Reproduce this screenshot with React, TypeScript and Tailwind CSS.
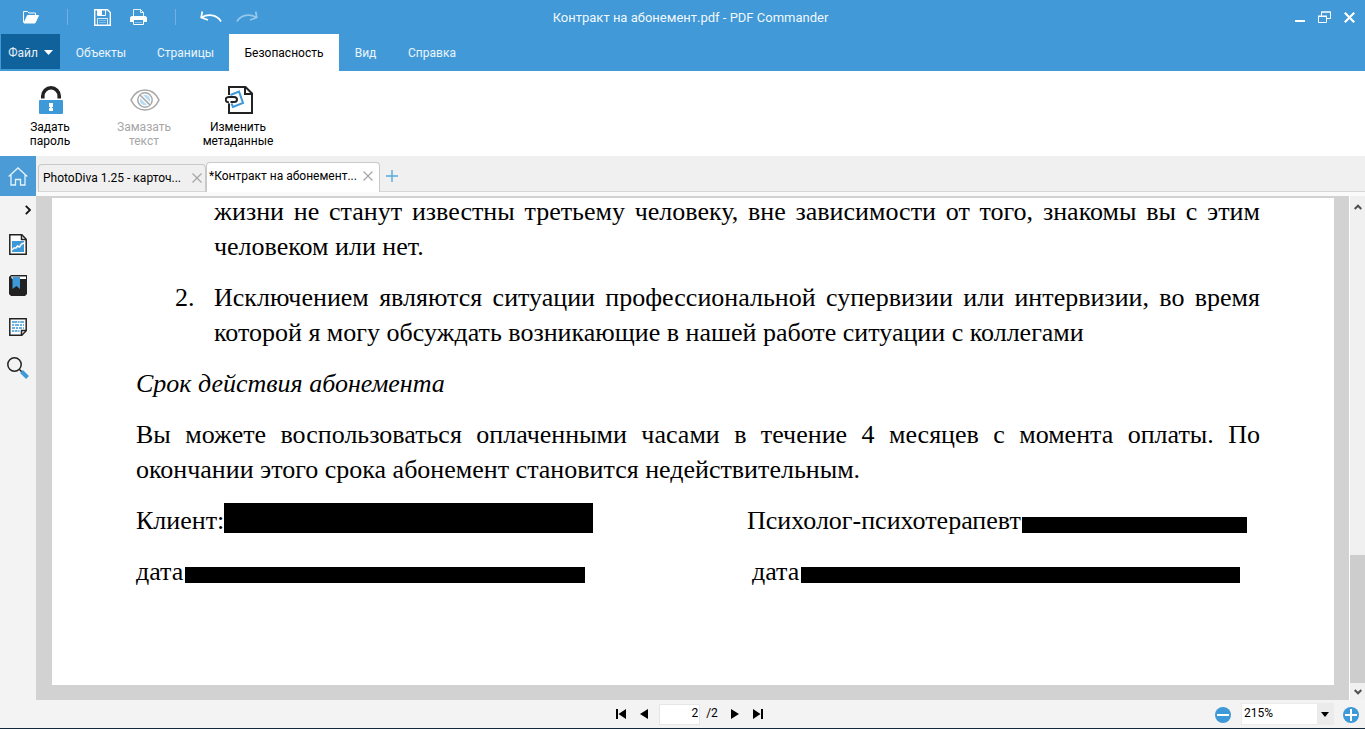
import type { ReactNode } from 'react';

const menus = [
  { label: 'Объекты', cls: 'w-[82px] text-white/90' },
  { label: 'Страницы', cls: 'w-[87px] text-white/90' },
  { label: 'Безопасность', cls: 'w-[110px] bg-white text-black' },
  { label: 'Вид', cls: 'w-[53px] text-white/90' },
  { label: 'Справка', cls: 'w-[80px] text-white/90' },
];

function IconButton({ label, className, children }: { label: string; className: string; children: ReactNode }) {
  return (
    <button type="button" aria-label={label} className={`flex shrink-0 items-center justify-center ${className}`}>
      {children}
    </button>
  );
}

function TitleBar() {
  return (
    <header className="grid h-[34px] shrink-0 grid-cols-[1fr_auto_1fr] items-center">
      <div className="flex items-center">
        <IconButton label="Открыть" className="ml-[22px] w-[18px]">
          <svg width="18" height="14" viewBox="0 0 18 14" fill="none" stroke="#fff">
            <path d="M1.500 12.500V1.500h4l1.500 1.500h6.500v2.500" />
            <path d="M2 13L5.500 5.500h11L13 13z" fill="#fff" />
          </svg>
        </IconButton>
        <span className="ml-[27px] h-4 w-px bg-[#77aee8]" />
        <IconButton label="Сохранить" className="ml-[26px] w-[17px]">
          <svg width="17" height="17" viewBox="0 0 17 17" fill="none" stroke="#fff">
            <path d="M.7.7h12.800l2.800 2.800v12.800H.7z" strokeWidth="1.400" />
            <path d="M3.500 1v5.500h8V1" />
            <path d="M4 1h4v5H4z" fill="#fff" stroke="none" />
            <path d="M3.500 16V9.500h10V16" strokeOpacity=".8" />
            <path d="M5 11.500h7M5 13.500h7" strokeOpacity=".35" />
          </svg>
        </IconButton>
        <IconButton label="Печать" className="ml-[19px] w-[17px]">
          <svg width="17" height="16" viewBox="0 0 17 16" fill="none" stroke="#fff">
            <path d="M3.500 7V.5h7l3 3V7M10.500.5v3h3" strokeOpacity=".85" />
            <path d="M1.500 7h14L17 8.500V13h-3v-2H3v2H0V8.500z" fill="#fff" stroke="none" />
            <path d="M3.500 11v4.500h10V11" />
            <path d="M5 13.500h7" strokeOpacity=".35" />
          </svg>
        </IconButton>
        <span className="ml-[28px] h-4 w-px bg-[#77aee8]" />
        <IconButton label="Отменить" className="ml-6 w-[22px]">
          <svg width="22" height="12" viewBox="0 0 22 12" fill="none" stroke="#fff" strokeWidth="1.700">
            <path d="M1.500 6.500C8 2.500 17 3.500 21 10.500M2.300.5L1.200 6.500 8 9" />
          </svg>
        </IconButton>
        <IconButton label="Повторить" className="ml-[14px] w-[22px] opacity-45">
          <svg width="22" height="12" viewBox="0 0 22 12" fill="none" stroke="#fff" strokeWidth="1.700">
            <path d="M20.500 6.500C14 2.500 5 3.500 1 10.500M19.700.5L20.800 6.500 14 9" />
          </svg>
        </IconButton>
      </div>
      <h1 className="pt-px pl-4 text-[13px] text-white/95">Контракт на абонемент.pdf - PDF Commander</h1>
      <div className="flex items-center justify-end gap-3 pr-[10px]">
        <IconButton label="Свернуть" className="w-3">
          <svg width="12" height="12" viewBox="0 0 12 12"><path d="M2 9h10v2H2z" fill="#fff" /></svg>
        </IconButton>
        <IconButton label="Восстановить" className="w-[14px]">
          <svg width="13" height="12" viewBox="0 0 13 12" fill="none" stroke="#fff">
            <path d="M3.500 5V1h9v6.500H9M3 1h10" />
            <path d="M.5 5.500h8v6h-8zM0 5h9" />
          </svg>
        </IconButton>
        <IconButton label="Закрыть" className="w-3">
          <svg width="11" height="11" viewBox="0 0 11 11" fill="none" stroke="#fff" strokeWidth="2.200"><path d="M.8.8l9.400 9.400M10.200.8L.8 10.200" /></svg>
        </IconButton>
      </div>
    </header>
  );
}

function MenuBar() {
  return (
    <nav className="flex h-[37px] shrink-0 text-xs">
      <button type="button" className="mb-0.5 ml-px flex w-[59px] items-center justify-center gap-[6px] bg-[#0f629b] pt-0.5 text-white/90">
        Файл
        <svg width="9" height="5" viewBox="0 0 9 5"><path d="M0 0h9L4.500 5z" fill="#fff" /></svg>
      </button>
      {menus.map((m) => (
        <button key={m.label} type="button" className={`flex items-center justify-center ${m.cls}`}>
          {m.label}
        </button>
      ))}
    </nav>
  );
}

function Tool({ first, second, disabled, children }: { first: string; second: string; disabled?: boolean; children: ReactNode }) {
  return (
    <button type="button" disabled={disabled} className="flex w-[94px] flex-col items-center text-xs leading-[14px] text-black disabled:text-[#a6a6a6]">
      <span className="flex h-[30px] items-center justify-center pl-0.5">{children}</span>
      <span className="mt-[5px]">{first}</span>
      <span>{second}</span>
    </button>
  );
}

function Ribbon() {
  return (
    <section className="flex h-[85px] shrink-0 bg-white pt-[14px] pl-[3px]">
      <Tool first="Задать" second="пароль">
        <svg width="24" height="28" viewBox="0 0 24 28">
          <path d="M3.800 12.500V10a8.200 8.200 0 0 1 16.400 0v2.500" fill="none" stroke="#222" strokeWidth="3.600" />
          <rect y="14" width="24" height="14" rx="1" fill="#3d99d8" />
          <path d="M10 17h4v4h-1v1h1v3h-4v-3h1v-1h-1z" fill="#fff" />
        </svg>
      </Tool>
      <Tool first="Замазать" second="текст" disabled>
        <svg width="30" height="22" viewBox="0 0 30 22" fill="none" stroke="#a8a8a8" strokeWidth="1.600">
          <path d="M1 11C4 4.500 9 1 15 1s11 3.500 14 10c-3 6.500-8 10-14 10S4 17.500 1 11z" />
          <circle cx="15" cy="11" r="7.200" fill="#fff" strokeWidth="1.500" />
          <circle cx="15" cy="11" r="5.200" fill="#b5dcf5" stroke="none" />
          <path d="M10.500 6.500l9 9" stroke="#fff" strokeWidth="4" />
          <path d="M10 6l10 10" strokeWidth="1.700" />
        </svg>
      </Tool>
      <Tool first="Изменить" second="метаданные">
        <svg width="28" height="28" viewBox="0 0 28 28" fill="none" stroke="#222" strokeWidth="2">
          <path d="M4 9V1h16.500L27 7.500V27H4V17.500" />
          <path d="M20 1.500V8h6.500" />
          <path d="M5.500 9L14 5.500 18 17 8 21 6.500 17.500" stroke="#3d99d8" />
          <path d="M4 16.500C-.5 16-.2 11.500 3.500 11H9c4 0 4 5 0 5H5.500" />
        </svg>
      </Tool>
    </section>
  );
}

function CloseMark() {
  return <svg width="10" height="10" viewBox="0 0 10 10" fill="none" stroke="#a5a5a5" strokeWidth="1.200"><path d="M.5.5l9 9M9.500.5l-9 9" /></svg>;
}

function DocumentTabs() {
  return (
    <div className="flex h-10 shrink-0 bg-[#f0f0f0] text-xs">
      <IconButton label="Домой" className="w-9 bg-[#4b9cd6]">
        <svg width="20" height="19" viewBox="0 0 20 19" fill="none" stroke="#e5f3fc" strokeWidth="1.300">
          <path d="M.7 9.500L10 1l9.300 8.500M3 8v10h4.500v-5.500h5V18H17V8" />
        </svg>
      </IconButton>
      <div className="flex flex-1 items-end border-b-4 border-[#fafafa] pl-0.5">
        <div className="flex h-7 w-[168px] items-center justify-between rounded-t border border-b-[#d6d6d6] border-[#c9c9c9] pr-[3px] pb-px pl-1">
          <button type="button">PhotoDiva 1.25 - карточ...</button>
          <IconButton label="Закрыть вкладку PhotoDiva" className="w-[10px]"><CloseMark /></IconButton>
        </div>
        <div className="flex h-[30px] w-[174px] items-center justify-between rounded-t border border-b-0 border-[#c9c9c9] bg-white pr-[6px] pb-1 pl-0.5">
          <button type="button">*Контракт на абонемент...</button>
          <IconButton label="Закрыть вкладку Контракт" className="w-[10px]"><CloseMark /></IconButton>
        </div>
        <div className="flex h-[30px] flex-1 items-center border-b border-[#d6d6d6] pb-0.5 pl-[6px]">
          <IconButton label="Новая вкладка" className="w-3">
            <svg width="12" height="12" viewBox="0 0 12 12" stroke="#58a8dc" strokeWidth="1.400"><path d="M6 0v12M0 6h12" /></svg>
          </IconButton>
        </div>
      </div>
    </div>
  );
}

function Sidebar() {
  return (
    <aside className="flex w-9 shrink-0 flex-col items-center bg-[#f3f3f3] pt-2">
      <IconButton label="Развернуть панель" className="mr-1 h-3 w-2 self-end">
        <svg width="6" height="10" viewBox="0 0 6 10" fill="none" stroke="#111" strokeWidth="1.800"><path d="M.8.8L5 5 .8 9.200" /></svg>
      </IconButton>
      <IconButton label="Миниатюры" className="mt-[18px] h-[21px] w-[18px]">
        <svg width="18" height="21" viewBox="0 0 18 21" fill="none" stroke="#222" strokeWidth="1.500">
          <path d="M.8.8h12l4.400 4.400v15H.8z" fill="#fff" />
          <path d="M12.500 1v4.500H17" />
          <path d="M3 7h12v11H3z" fill="#3d99d8" stroke="none" />
          <path d="M3 16l2-2h2l1.500-2 2 1 2-3 2.500-1" stroke="#fff" />
        </svg>
      </IconButton>
      <IconButton label="Закладки" className="mt-5 h-[21px] w-[18px]">
        <svg width="18" height="21" viewBox="0 0 18 21">
          <path d="M2 0h16v19l-2 2H2l-2-2V2z" fill="#222" />
          <path d="M2 1.500h15v2.500H3z" fill="#fff" />
          <path d="M3.500 2H11v12l-3.500-3-4 3z" fill="#3d99d8" />
        </svg>
      </IconButton>
      <IconButton label="Комментарии" className="mt-[21px] h-5 w-[18px]">
        <svg width="18" height="18" viewBox="0 0 18 18" fill="none" stroke="#222" strokeWidth="1.500">
          <path d="M.8.8h16.400v12l-4.400 4.400H.8z" fill="#fff" />
          <path d="M12.500 17v-4.500H17" />
          <g stroke="#3d99d8" strokeWidth="1.300">
            <path d="M3 4h12" strokeDasharray="5 .6 2 .6" />
            <path d="M3 7h12" strokeDasharray="2 1 4 1" />
            <path d="M3 10h12" strokeDasharray="3 1 2 1" />
            <path d="M3 13h7.500" strokeDasharray="2 .6 3 .6" />
          </g>
        </svg>
      </IconButton>
      <IconButton label="Поиск" className="mt-5 h-[22px] w-[22px]">
        <svg width="22" height="22" viewBox="0 0 22 22" fill="none">
          <circle cx="7.500" cy="7.500" r="6.700" stroke="#222" strokeWidth="1.500" />
          <path d="M12.500 12.500l2.500 2.500" stroke="#222" strokeWidth="1.500" />
          <path d="M14.500 14.500l6 6" stroke="#3d99d8" strokeWidth="4" />
        </svg>
      </IconButton>
    </aside>
  );
}

function Page() {
  return (
    <article className="flex-1 overflow-hidden bg-white pr-[74px] pl-[84px] font-['Liberation_Serif',serif] text-[26px] leading-[35px] text-black">
      <div className="-mt-1 flex flex-col gap-4">
        <p className="pl-[78px] text-justify">
          <span className="block [text-align-last:justify]">жизни не станут известны третьему человеку, вне зависимости от того, знакомы вы с этим</span>
          человеком или нет.
        </p>
        <div className="flex">
          <span className="w-[78px] shrink-0 pl-[39px]">2.</span>
          <p className="flex-1 text-justify">Исключением являются ситуации профессиональной супервизии или интервизии, во время которой я могу обсуждать возникающие в нашей работе ситуации с коллегами</p>
        </div>
        <h2 className="italic">Срок действия абонемента</h2>
        <p className="text-justify">Вы можете воспользоваться оплаченными часами в течение 4 месяцев с момента оплаты. По окончании этого срока абонемент становится недействительным.</p>
        <div className="flex">
          <div className="flex w-[611px] shrink-0">
            Клиент:<span className="h-[30px] w-[369px] bg-black" />
          </div>
          <div className="flex items-start">
            Психолог-психотерапевт:<span className="mt-[14px] -ml-[6px] h-4 w-[225px] bg-black" />
          </div>
        </div>
        <div className="flex">
          <div className="flex w-[616px] shrink-0 gap-0.5">
            дата<span className="mt-[13px] h-4 w-[400px] bg-black" />
          </div>
          <div className="flex gap-0.5">
            дата<span className="mt-[13px] h-4 w-[439px] bg-black" />
          </div>
        </div>
      </div>
    </article>
  );
}

function Scrollbar() {
  return (
    <div className="flex w-4 shrink-0 flex-col border-l border-white bg-[#f0f0f0]">
      <IconButton label="Прокрутить вверх" className="h-[22px]">
        <svg width="8" height="6" viewBox="0 0 8 6" fill="none" stroke="#505050" strokeWidth="2"><path d="M.7 5L4 1.700 7.300 5" /></svg>
      </IconButton>
      <div className="flex-[337]" />
      <div className="flex-[128] bg-[#cdcdcd]" />
      <IconButton label="Прокрутить вниз" className="h-[17px]">
        <svg width="8" height="6" viewBox="0 0 8 6" fill="none" stroke="#505050" strokeWidth="2"><path d="M.7 1L4 4.300 7.300 1" /></svg>
      </IconButton>
    </div>
  );
}

function StatusBar() {
  return (
    <footer className="grid h-[29px] shrink-0 grid-cols-[1fr_auto_1fr] items-center border-b border-[#14283c] bg-[#f3f3f3] text-xs">
      <span />
      <div className="flex items-center pl-[14px]">
        <IconButton label="Первая страница" className="w-[10px]"><svg width="10" height="10"><path d="M0 0h2v10H0zM10 0v10L2.500 5z" /></svg></IconButton>
        <IconButton label="Предыдущая страница" className="ml-[14px] w-2"><svg width="8" height="10"><path d="M8 0v10L0 5z" /></svg></IconButton>
        <input aria-label="Номер страницы" defaultValue="2" className="ml-[11px] h-[21px] w-[41px] border border-[#e6e6e6] bg-white pr-px pb-0.5 text-right" />
        <span className="ml-[6px] pb-0.5">/2</span>
        <IconButton label="Следующая страница" className="ml-[13px] w-2"><svg width="8" height="10"><path d="M0 0v10l8-5z" /></svg></IconButton>
        <IconButton label="Последняя страница" className="ml-[14px] w-[10px]"><svg width="10" height="10"><path d="M8 0h2v10H8zM0 0v10l7.500-5z" /></svg></IconButton>
      </div>
      <div className="flex items-center justify-end pr-[6px]">
        <IconButton label="Уменьшить" className="mt-0.5 w-4"><svg width="16" height="16"><circle cx="8" cy="8" r="8" fill="#3d99d8" /><path d="M2 7h12v2H2z" fill="#fff" /></svg></IconButton>
        <div className="mr-[9px] ml-[10px] grid h-[22px] w-[93px] grid-cols-[76px_17px] items-center bg-[#ebebeb]">
          <select aria-label="Масштаб" className="col-start-1 col-end-3 row-start-1 h-[22px] w-full appearance-none border border-[#ebebeb] bg-[linear-gradient(to_right,#fff_75px,#ebebeb_75px)] pb-[3px] pl-0.5">
            <option>215%</option>
          </select>
          <svg width="8" height="5" className="pointer-events-none col-start-2 row-start-1 ml-1"><path d="M0 0h8L4 5z" /></svg>
        </div>
        <IconButton label="Увеличить" className="mt-0.5 w-4"><svg width="16" height="16"><circle cx="8" cy="8" r="8" fill="#3d99d8" /><path d="M2 7h12v2H2zM7 2h2v12H7z" fill="#fff" /></svg></IconButton>
      </div>
    </footer>
  );
}

export default function App() {
  return (
    <div className="flex h-screen flex-col overflow-hidden bg-[#4199d8] font-[Roboto,sans-serif]">
      <TitleBar />
      <MenuBar />
      <Ribbon />
      <DocumentTabs />
      <main className="flex min-h-0 flex-1">
        <Sidebar />
        <div className="flex min-w-0 flex-1 bg-[#d2d2d2] pt-0.5 pr-[15px] pb-[15px] pl-4">
          <Page />
        </div>
        <Scrollbar />
      </main>
      <StatusBar />
    </div>
  );
}
